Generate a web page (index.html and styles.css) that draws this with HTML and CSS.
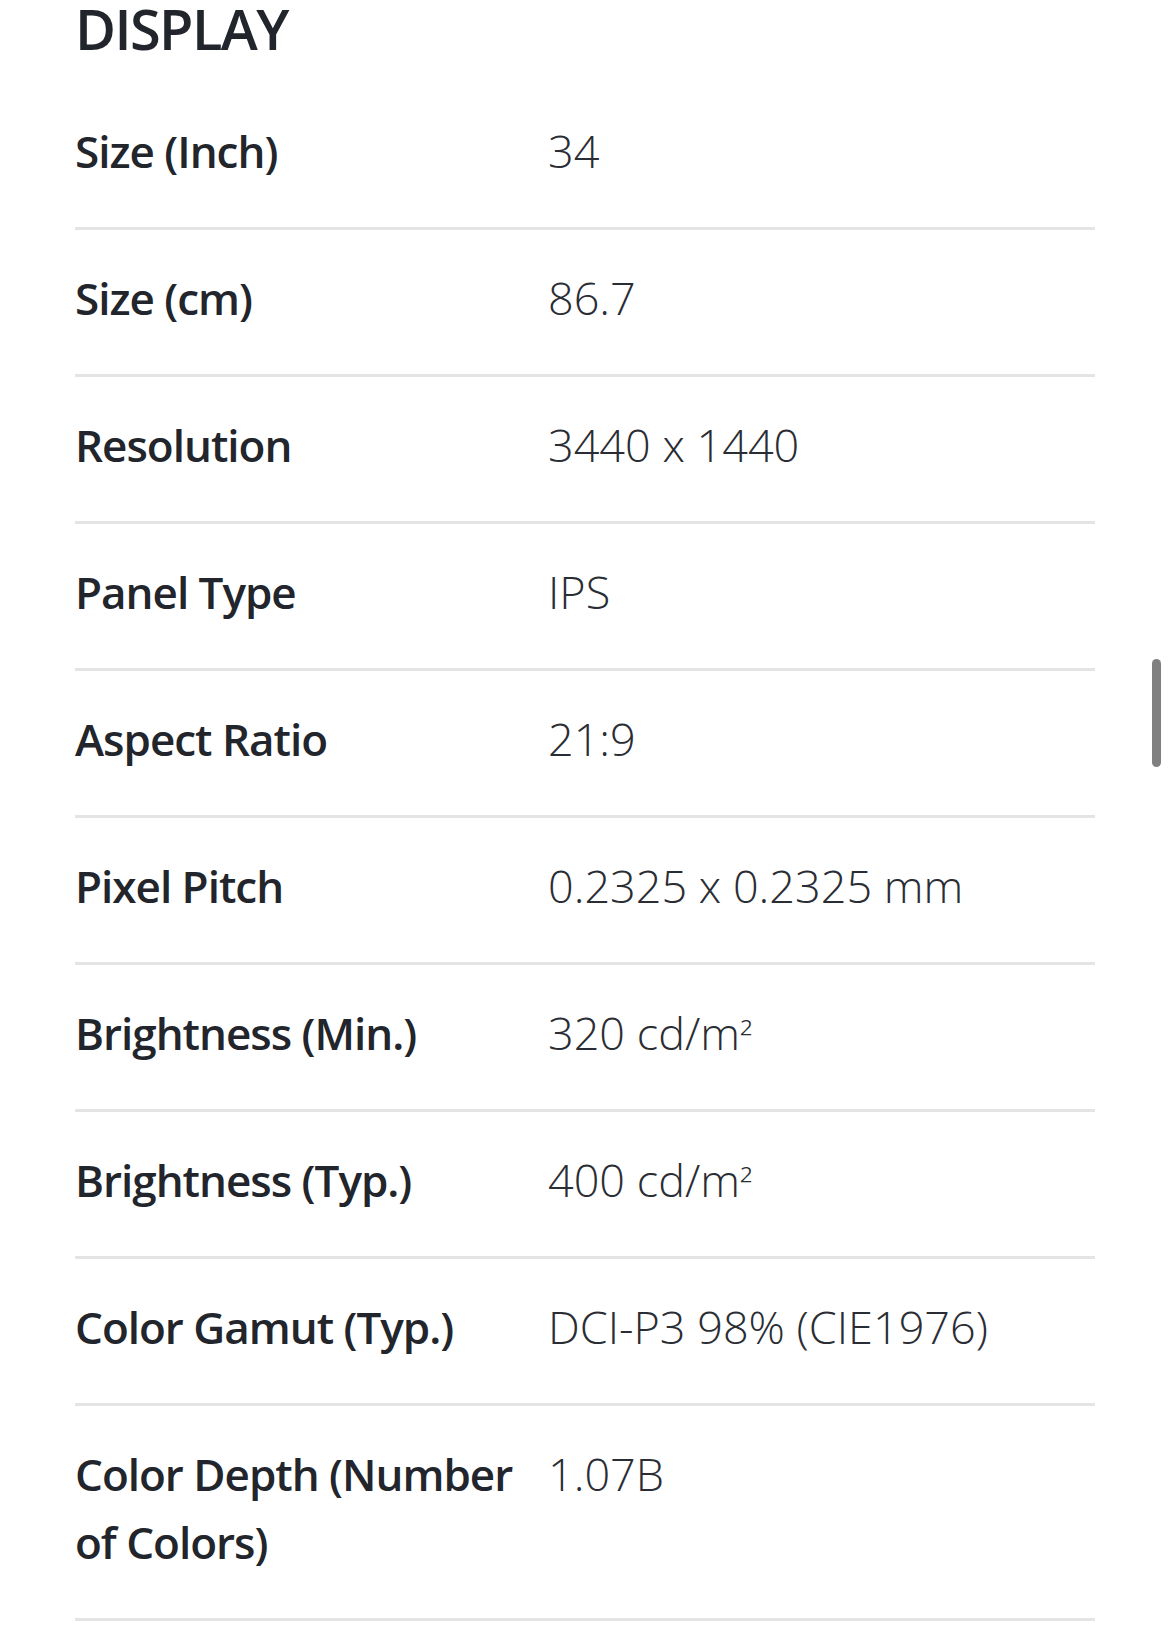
FILE: index.html
```html
<!DOCTYPE html>
<html lang="en">
<head>
<meta charset="utf-8">
<title>Display specs</title>
<link rel="stylesheet" href="styles.css">
</head>
<body>
<main class="specs">
  <h2 class="specs-title">DISPLAY</h2>
  <dl class="spec-list">
    <div class="spec-row"><dt class="spec-label">Size (Inch)</dt><dd class="spec-value">34</dd></div>
    <div class="spec-row"><dt class="spec-label">Size (cm)</dt><dd class="spec-value">86.7</dd></div>
    <div class="spec-row"><dt class="spec-label">Resolution</dt><dd class="spec-value">3440 x 1440</dd></div>
    <div class="spec-row"><dt class="spec-label">Panel Type</dt><dd class="spec-value">IPS</dd></div>
    <div class="spec-row"><dt class="spec-label">Aspect Ratio</dt><dd class="spec-value">21:9</dd></div>
    <div class="spec-row"><dt class="spec-label">Pixel Pitch</dt><dd class="spec-value">0.2325 x 0.2325 mm</dd></div>
    <div class="spec-row"><dt class="spec-label">Brightness (Min.)</dt><dd class="spec-value">320 cd/m<span class="sq">²</span></dd></div>
    <div class="spec-row"><dt class="spec-label">Brightness (Typ.)</dt><dd class="spec-value">400 cd/m<span class="sq">²</span></dd></div>
    <div class="spec-row"><dt class="spec-label">Color Gamut (Typ.)</dt><dd class="spec-value">DCI-P3 98% (CIE1976)</dd></div>
    <div class="spec-row"><dt class="spec-label">Color Depth (Number of Colors)</dt><dd class="spec-value">1.07B</dd></div>
  </dl>
</main>
<div class="scroll-thumb"></div>
</body>
</html>
```

FILE: styles.css
```css
html, body {
  margin: 0;
  padding: 0;
  background: #ffffff;
}

body {
  font-family: "Open Sans", "Noto Sans", "Liberation Sans", sans-serif;
  color: #22252b;
  overflow: hidden;
}

.specs {
  width: 1020px;
  padding-left: 75px;
}

.specs-title {
  margin: 0 0 27px 0;
  font-size: 56px;
  line-height: 56px;
  font-weight: 600;
  letter-spacing: -1.6px;
  color: #22252b;
}

.spec-list {
  margin: 0;
  padding: 0;
}

.spec-row {
  display: grid;
  grid-template-columns: 473px 1fr;
  padding: 34px 0 42px 0;
  border-bottom: 3px solid #e4e4e4;
}

.spec-label {
  margin: 0;
  padding-right: 16px;
  font-size: 44px;
  line-height: 68px;
  font-weight: 600;
  letter-spacing: -1px;
  color: #22252b;
}

.spec-value {
  margin: 0;
  font-size: 45px;
  line-height: 68px;
  font-weight: 300;
  color: #2a2d33;
}

.sq {
  font-size: 0.8em;
  line-height: 0;
}

.scroll-thumb {
  position: fixed;
  left: 1152px;
  top: 659px;
  width: 9px;
  height: 108px;
  border-radius: 5px;
  background: #808080;
}
```
